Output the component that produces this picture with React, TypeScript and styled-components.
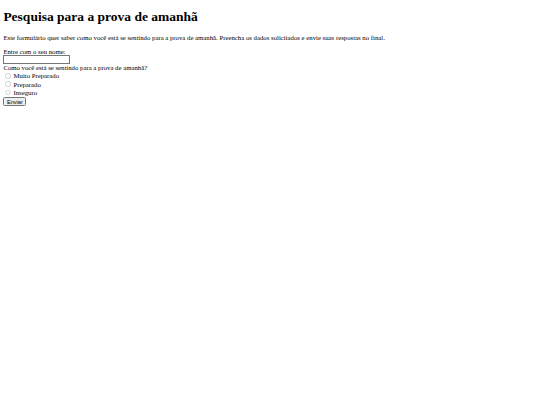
import React from 'react';
import styled, { createGlobalStyle } from 'styled-components';

const GlobalStyle = createGlobalStyle`
  html, body {
    margin: 0;
    padding: 0;
    background: #ffffff;
  }
`;

// the reference is a plain unstyled page, 1280px wide, shrunk to 540px
const Page = styled.div`
  zoom: 0.421875;
  margin: 8px;
  font-family: 'Liberation Serif', 'Times New Roman', serif;
  font-size: 16px;
  color: #000000;
`;

const Title = styled.h1`
  font-size: 2em;
  font-weight: bold;
  margin: 0.67em 0;
`;

const Intro = styled.p`
  margin: 1em 0;
`;

const Form = styled.form`
  display: flex;
  flex-direction: column;
  align-items: flex-start;
`;

const Line = styled.div`
  line-height: 18px;
`;

const TextInput = styled.input`
  box-sizing: border-box;
  width: 157px;
  height: 20px;
  margin: 0;
  font-family: Arial, 'Liberation Sans', sans-serif;
  font-size: 13.33px;
`;

const OptionRow = styled.div`
  display: flex;
  align-items: center;
  height: 20px;
`;

const Radio = styled.input`
  width: 14px;
  height: 14px;
  margin: 0 5px 0 5px;
  opacity: 0.7;
`;

const SubmitButton = styled.button`
  margin-top: 1px;
  height: 20px;
  font-family: Arial, 'Liberation Sans', sans-serif;
  font-size: 13.33px;
`;

const options = [
  { id: 'muito', label: 'Muito Preparado' },
  { id: 'preparado', label: 'Preparado' },
  { id: 'inseguro', label: 'Inseguro' },
];

const App = () => {
  return (
    <>
      <GlobalStyle />
      <Page>
        <Title>Pesquisa para a prova de amanhã</Title>
        <Intro>
          Este formulário quer saber como você está se sentindo para a prova de amanhã. Preencha os
          dados solicitados e envie suas respostas no final.
        </Intro>
        <Form onSubmit={(e) => e.preventDefault()}>
          <Line>
            <label htmlFor="nome">Entre com o seu nome:</label>
          </Line>
          <TextInput type="text" id="nome" name="nome" />
          <Line>Como você está se sentindo para a prova de amanhã?</Line>
          {options.map((option) => (
            <OptionRow key={option.id}>
              <Radio type="radio" id={option.id} name="sentimento" value={option.id} />
              <label htmlFor={option.id}>{option.label}</label>
            </OptionRow>
          ))}
          <SubmitButton type="submit">Enviar</SubmitButton>
        </Form>
      </Page>
    </>
  );
};

export default App;
